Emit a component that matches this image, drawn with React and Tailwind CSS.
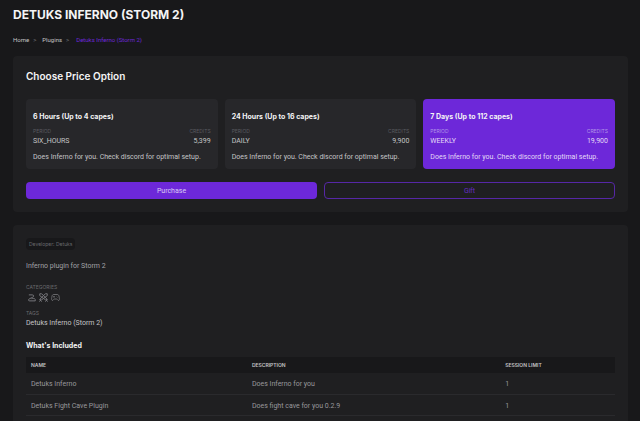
import React, { useState } from "react";

const priceOptions = [
  { title: "6 Hours (Up to 4 capes)", period: "SIX_HOURS", credits: 5399 },
  { title: "24 Hours (Up to 16 capes)", period: "DAILY", credits: 9900 },
  { title: "7 Days (Up to 112 capes)", period: "WEEKLY", credits: 19900 },
];

const included = [
  { name: "Detuks Inferno", description: "Does Inferno for you", limit: 1 },
  {
    name: "Detuks Fight Cave Plugin",
    description: "Does fight cave for you 0.2.9",
    limit: 1,
  },
];

function PriceCard({ option, isActive, onSelect }) {
  const labelColor = isActive ? "text-[#b095e8]" : "text-[#5a5a60]";

  return (
    <button
      type="button"
      aria-pressed={isActive}
      onClick={onSelect}
      className={`rounded px-[7px] pt-3 pb-[6px] text-left ${
        isActive ? "bg-[#6d28d9] text-[#e4daf7]" : "bg-[#27272a] text-[#c4c4c6]"
      }`}
    >
      <h3 className="font-['Inter',sans-serif] text-[7px] leading-3 font-bold text-[#f4f4f5]">
        {option.title}
      </h3>
      <div
        className={`mt-1 flex justify-between font-['Inter',sans-serif] text-[5px] leading-2 ${labelColor}`}
      >
        <span>PERIOD</span>
        <span>CREDITS</span>
      </div>
      <div className="flex justify-between text-[7px] leading-3">
        <span>{option.period}</span>
        <span>{option.credits.toLocaleString("en-US")}</span>
      </div>
      <p className="mt-1 text-[7px] leading-3 whitespace-nowrap">
        Does Inferno for you. Check discord for optimal setup.
      </p>
    </button>
  );
}

function SnakeIcon() {
  return (
    <svg width="9" height="9" viewBox="0 0 24 24" fill="none" stroke="currentColor" strokeWidth="2.6" strokeLinecap="round">
      <path d="M6 5h8c5 0 5 5 0 7l-7 3c-4 2-4 6 0 6h15v-4c-2-3-6-3-9-2" />
    </svg>
  );
}

function SwordsIcon() {
  return (
    <svg width="9" height="9" viewBox="0 0 24 24" fill="none" stroke="currentColor" strokeWidth="2.6" strokeLinejoin="round">
      <path d="M2 2h5l14 14-3 3L2 7zM22 2h-5L3 16l3 3L22 7zM1 17l6 6M17 23l6-6M5 18l-4 5M19 18l4 5" />
    </svg>
  );
}

function GamepadIcon() {
  return (
    <svg width="9" height="9" viewBox="0 0 24 24" fill="none" stroke="currentColor" strokeWidth="2.2" strokeLinejoin="round">
      <path d="M7 4h10c3 0 4 2 5 8 1 5 0 8-2 8s-3-4-5-4H9c-2 0-3 4-5 4s-3-3-2-8c1-6 2-8 5-8zM6 10h4M8 8v4M15 9h1M17 12h1" />
    </svg>
  );
}

function App() {
  const [selected, setSelected] = useState(2);

  return (
    <div className="flex h-screen flex-col overflow-hidden bg-[#18181a] pr-3 pl-[13px] font-['Roboto',sans-serif] text-[7px] leading-3 text-[#c4c4c6]">
      <h1 className="mt-[6px] font-['Inter',sans-serif] text-[12px] leading-[18px] font-bold text-[#f4f4f5]">
        DETUKS INFERNO (STORM 2)
      </h1>
      <nav aria-label="Breadcrumb" className="mt-[10px] flex text-[6px]">
        <a href="#home">Home</a>
        <span className="mx-1 text-[#77777b]">&gt;</span>
        <a href="#plugins" className="ml-[2px]">Plugins</a>
        <span className="mx-1 text-[#77777b]">&gt;</span>
        <a href="#detuks" className="ml-[3px] text-[#6d28d9]">Detuks Inferno (Storm 2)</a>
      </nav>

      <section className="mt-[10px] shrink-0 rounded-sm bg-[#1f1f21] px-[13px] pt-3 pb-[13px]">
        <h2 className="font-['Inter',sans-serif] text-[10px] leading-4 font-semibold text-[#f4f4f5]">
          Choose Price Option
        </h2>
        <div className="mt-[15px] grid grid-cols-3 gap-[7px]">
          {priceOptions.map((option, index) => (
            <PriceCard
              key={option.period}
              option={option}
              isActive={selected === index}
              onSelect={() => setSelected(index)}
            />
          ))}
        </div>
        <div className="mt-[13px] grid grid-cols-2 gap-[7px]">
          <button type="button" className="h-[17px] rounded bg-[#6d28d9] text-[#d9cbf4]">
            Purchase
          </button>
          <button type="button" className="h-[17px] rounded border border-[#5627a6] text-[#652cc4]">
            Gift
          </button>
        </div>
      </section>

      <section className="mt-[13px] grow rounded-t-sm bg-[#1f1f21] p-[13px]">
        <span className="block w-fit rounded bg-[#18181a] px-[3px] font-['Inter',sans-serif] text-[5px] leading-3 text-[#69696d]">
          Developer: Detuks
        </span>
        <p className="mt-[10px] text-[#a1a1a6]">Inferno plugin for Storm 2</p>

        <h4 className="mt-[11px] font-['Inter',sans-serif] text-[5px] leading-2 text-[#69696d]">
          CATEGORIES
        </h4>
        <div className="mt-[2px] flex gap-[3px] pl-[1px] text-[#77777b]">
          <SnakeIcon />
          <SwordsIcon />
          <GamepadIcon />
        </div>
        <h4 className="mt-[7px] font-['Inter',sans-serif] text-[5px] leading-2 text-[#69696d]">
          TAGS
        </h4>
        <p>Detuks Inferno (Storm 2)</p>

        <h3 className="mt-[11px] font-['Inter',sans-serif] font-bold text-[#f4f4f5]">
          What's Included
        </h3>
        <table className="mt-[5px] w-full table-fixed text-left text-[#98989c]">
          <thead className="bg-[#18181a] font-['Inter',sans-serif] text-[5px] text-[#c4c4c6]">
            <tr className="h-4">
              <th className="w-[37.5%] px-[5px] font-semibold">NAME</th>
              <th className="w-[43%] px-[5px] font-semibold">DESCRIPTION</th>
              <th className="px-[5px] font-semibold">SESSION LIMIT</th>
            </tr>
          </thead>
          <tbody>
            {included.map((item) => (
              <tr key={item.name} className="h-[21px] border-b border-[#2a2a2d]">
                <td className="px-[5px] pt-[2px]">{item.name}</td>
                <td className="px-[5px] pt-[2px]">{item.description}</td>
                <td className="px-[5px] pt-[2px]">{item.limit}</td>
              </tr>
            ))}
          </tbody>
        </table>
      </section>
    </div>
  );
}

export default App;
